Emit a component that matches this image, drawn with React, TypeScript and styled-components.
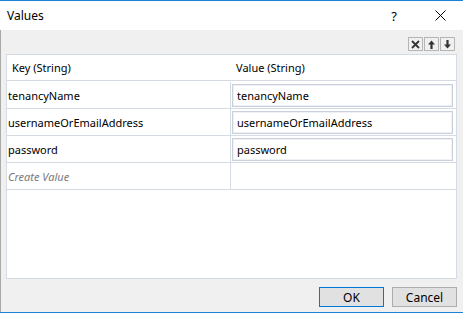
import styled, { createGlobalStyle } from "styled-components";

const rows = ["tenancyName", "usernameOrEmailAddress", "password"];

const GlobalStyle = createGlobalStyle`
  html, body {
    margin: 0;
    padding: 0;
    background: #ffffff;
  }
  body {
    font-family: "Noto Sans", "Open Sans", sans-serif;
    font-size: 11px;
    color: #000;
  }
`;

export default function App() {
  return (
    <>
      <GlobalStyle />
      <Window>
        <TitleBar>
          <Title>Values</Title>
          <HelpButton>?</HelpButton>
          <CloseButton>
            <svg width="11" height="11" viewBox="0 0 11 11">
              <path d="M0.5 0.5 L10.5 10.5 M10.5 0.5 L0.5 10.5" stroke="#000" strokeWidth="1" />
            </svg>
          </CloseButton>
        </TitleBar>
        <Body>
          <Toolbar>
            <ToolButton title="Delete">
              <svg width="9" height="9" viewBox="0 0 9 9">
                <path d="M1 1 L8 8 M8 1 L1 8" stroke="#333" strokeWidth="1.8" />
              </svg>
            </ToolButton>
            <ToolButton title="Up">
              <svg width="7" height="9" viewBox="0 0 7 9">
                <path d="M3.5 0.5 L7 4.5 H4.6 V9 H2.4 V4.5 H0 Z" fill="#333" />
              </svg>
            </ToolButton>
            <ToolButton title="Down">
              <svg width="7" height="9" viewBox="0 0 7 9">
                <path d="M3.5 8.5 L7 4.5 H4.6 V0 H2.4 V4.5 H0 Z" fill="#333" />
              </svg>
            </ToolButton>
          </Toolbar>
          <Grid>
            <HeaderCell>Key (String)</HeaderCell>
            <HeaderCell>Value (String)</HeaderCell>
            {rows.map((name) => (
              <Row key={name}>
                <KeyCell>{name}</KeyCell>
                <ValueCell>
                  <ValueBox>{name}</ValueBox>
                </ValueCell>
              </Row>
            ))}
            <KeyCell $placeholder>Create Value</KeyCell>
            <ValueCell />
          </Grid>
          <Footer>
            <DialogButton $primary>OK</DialogButton>
            <DialogButton>Cancel</DialogButton>
          </Footer>
        </Body>
      </Window>
    </>
  );
}

const Window = styled.div`
  width: 463px;
  height: 313px;
  display: flex;
  flex-direction: column;
  box-sizing: border-box;
  border-top: 1px solid #1883d7;
  border-bottom: 1px solid #1883d7;
  overflow: hidden;
`;

const TitleBar = styled.div`
  height: 30px;
  display: flex;
  align-items: center;
  background: #ffffff;
`;

const Title = styled.span`
  flex: 1;
  padding-left: 7px;
  font-size: 12px;
  color: #000;
`;

const HelpButton = styled.span`
  width: 46px;
  text-align: center;
  font-size: 13px;
`;

const CloseButton = styled.span`
  width: 46px;
  display: flex;
  justify-content: center;
  align-items: center;
`;

const Body = styled.div`
  flex: 1;
  display: flex;
  flex-direction: column;
  background: #f0f0f0;
  border-left: 1px solid #a9a9a9;
  padding: 7px 6px 5px 5px;
`;

const Toolbar = styled.div`
  display: flex;
  justify-content: flex-end;
  gap: 1px;
  height: 15px;
  margin-bottom: 2px;
  padding-right: 2px;
`;

const ToolButton = styled.div`
  width: 15px;
  height: 14px;
  box-sizing: border-box;
  border: 1px solid #b5b5b5;
  background: #f0f0f0;
  display: flex;
  align-items: center;
  justify-content: center;
`;

const Grid = styled.div`
  height: 225px;
  box-sizing: border-box;
  background: #ffffff;
  border: 1px solid #d5dbe2;
  display: grid;
  grid-template-columns: 224px 1fr;
  grid-auto-rows: 27px;
  align-content: start;
`;

const Row = styled.div`
  display: contents;
`;

const HeaderCell = styled.div`
  height: 25px;
  display: flex;
  align-items: center;
  padding-left: 5px;
  background: #ffffff;
  border-bottom: 1px solid #d5dbe2;
  color: #000;
`;

const KeyCell = styled.div<{ $placeholder?: boolean }>`
  display: flex;
  align-items: center;
  padding-left: 1px;
  box-sizing: border-box;
  border-bottom: 1px solid #d5dbe2;
  border-right: 1px solid #d5dbe2;
  color: ${(p) => (p.$placeholder ? "#7a7a7a" : "#000")};
  font-style: ${(p) => (p.$placeholder ? "italic" : "normal")};
`;

const ValueCell = styled.div`
  display: flex;
  align-items: center;
  padding: 1px 3px 1px 1px;
  box-sizing: border-box;
  border-bottom: 1px solid #d5dbe2;
`;

const ValueBox = styled.div`
  flex: 1;
  height: 23px;
  box-sizing: border-box;
  border: 1px solid #c9d0da;
  box-shadow: inset 0 0 0 1px #eef1f5;
  display: flex;
  align-items: center;
  padding-left: 4px;
  color: #000;
`;

const Footer = styled.div`
  display: flex;
  justify-content: flex-end;
  gap: 8px;
  margin-top: 8px;
`;

const DialogButton = styled.div<{ $primary?: boolean }>`
  width: 65px;
  height: 20px;
  box-sizing: border-box;
  display: flex;
  align-items: center;
  justify-content: center;
  background: #e1e1e1;
  border: 1px solid ${(p) => (p.$primary ? "#0078d7" : "#adadad")};
  color: #000;
  font-size: 12px;
`;
